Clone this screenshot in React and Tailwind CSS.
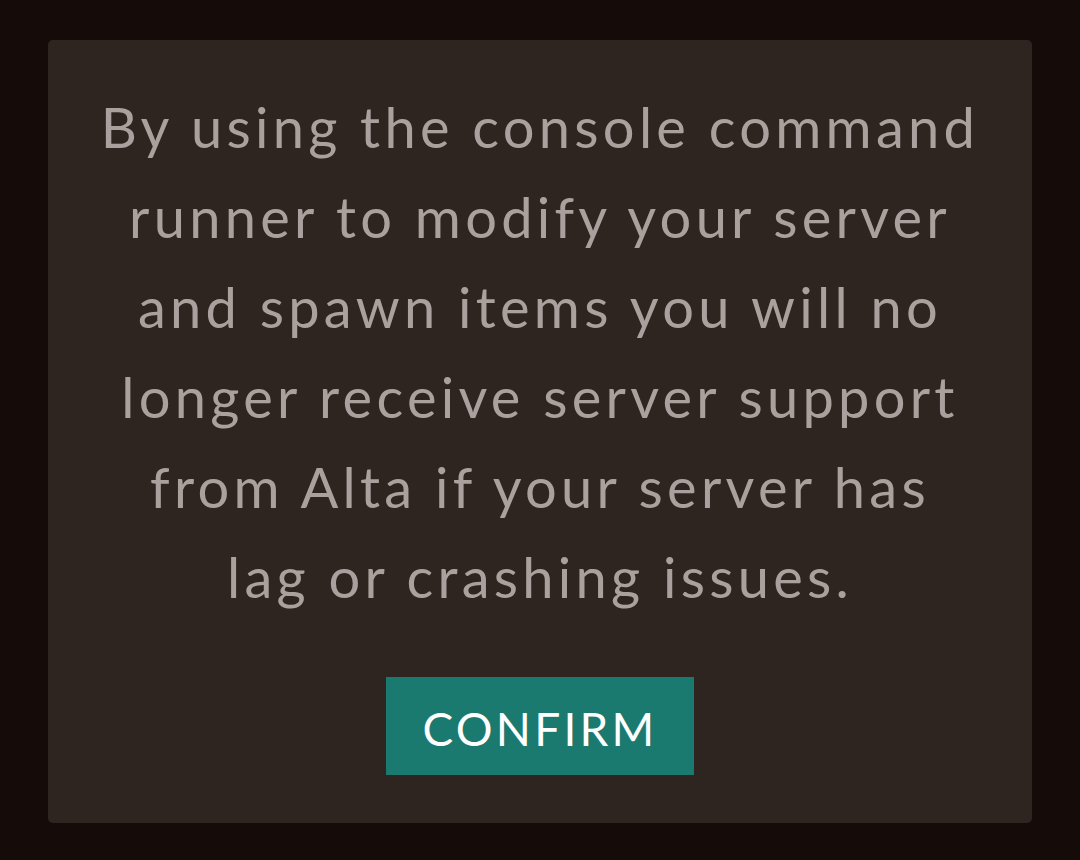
import React from 'react';

const font = { fontFamily: 'Lato, "Noto Sans", sans-serif' };

const lines = [
  'By using the console command',
  'runner to modify your server',
  'and spawn items you will no',
  'longer receive server support',
  'from Alta if your server has',
  'lag or crashing issues.',
];

export default function App() {
  return (
    <div className="w-[1080px] h-[860px] bg-[#150c09] pt-10 pb-[37px] px-12 flex" style={font}>
      <div className="flex-1 bg-[#2e2521] rounded-[5px] flex flex-col items-center pt-[42px]">
        <p className="text-[#aaa19e] text-[56px] leading-[90px] tracking-[0.076em] text-center shrink-0">
          {lines.map((l) => (
            <span key={l} className="block whitespace-nowrap">{l}</span>
          ))}
        </p>
        <button className="mt-[55px] shrink-0 w-[308px] h-[98px] bg-[#1b7a70] text-white text-[46px] tracking-[0.07em] pt-1 flex items-center justify-center">
          CONFIRM
        </button>
      </div>
    </div>
  );
}
